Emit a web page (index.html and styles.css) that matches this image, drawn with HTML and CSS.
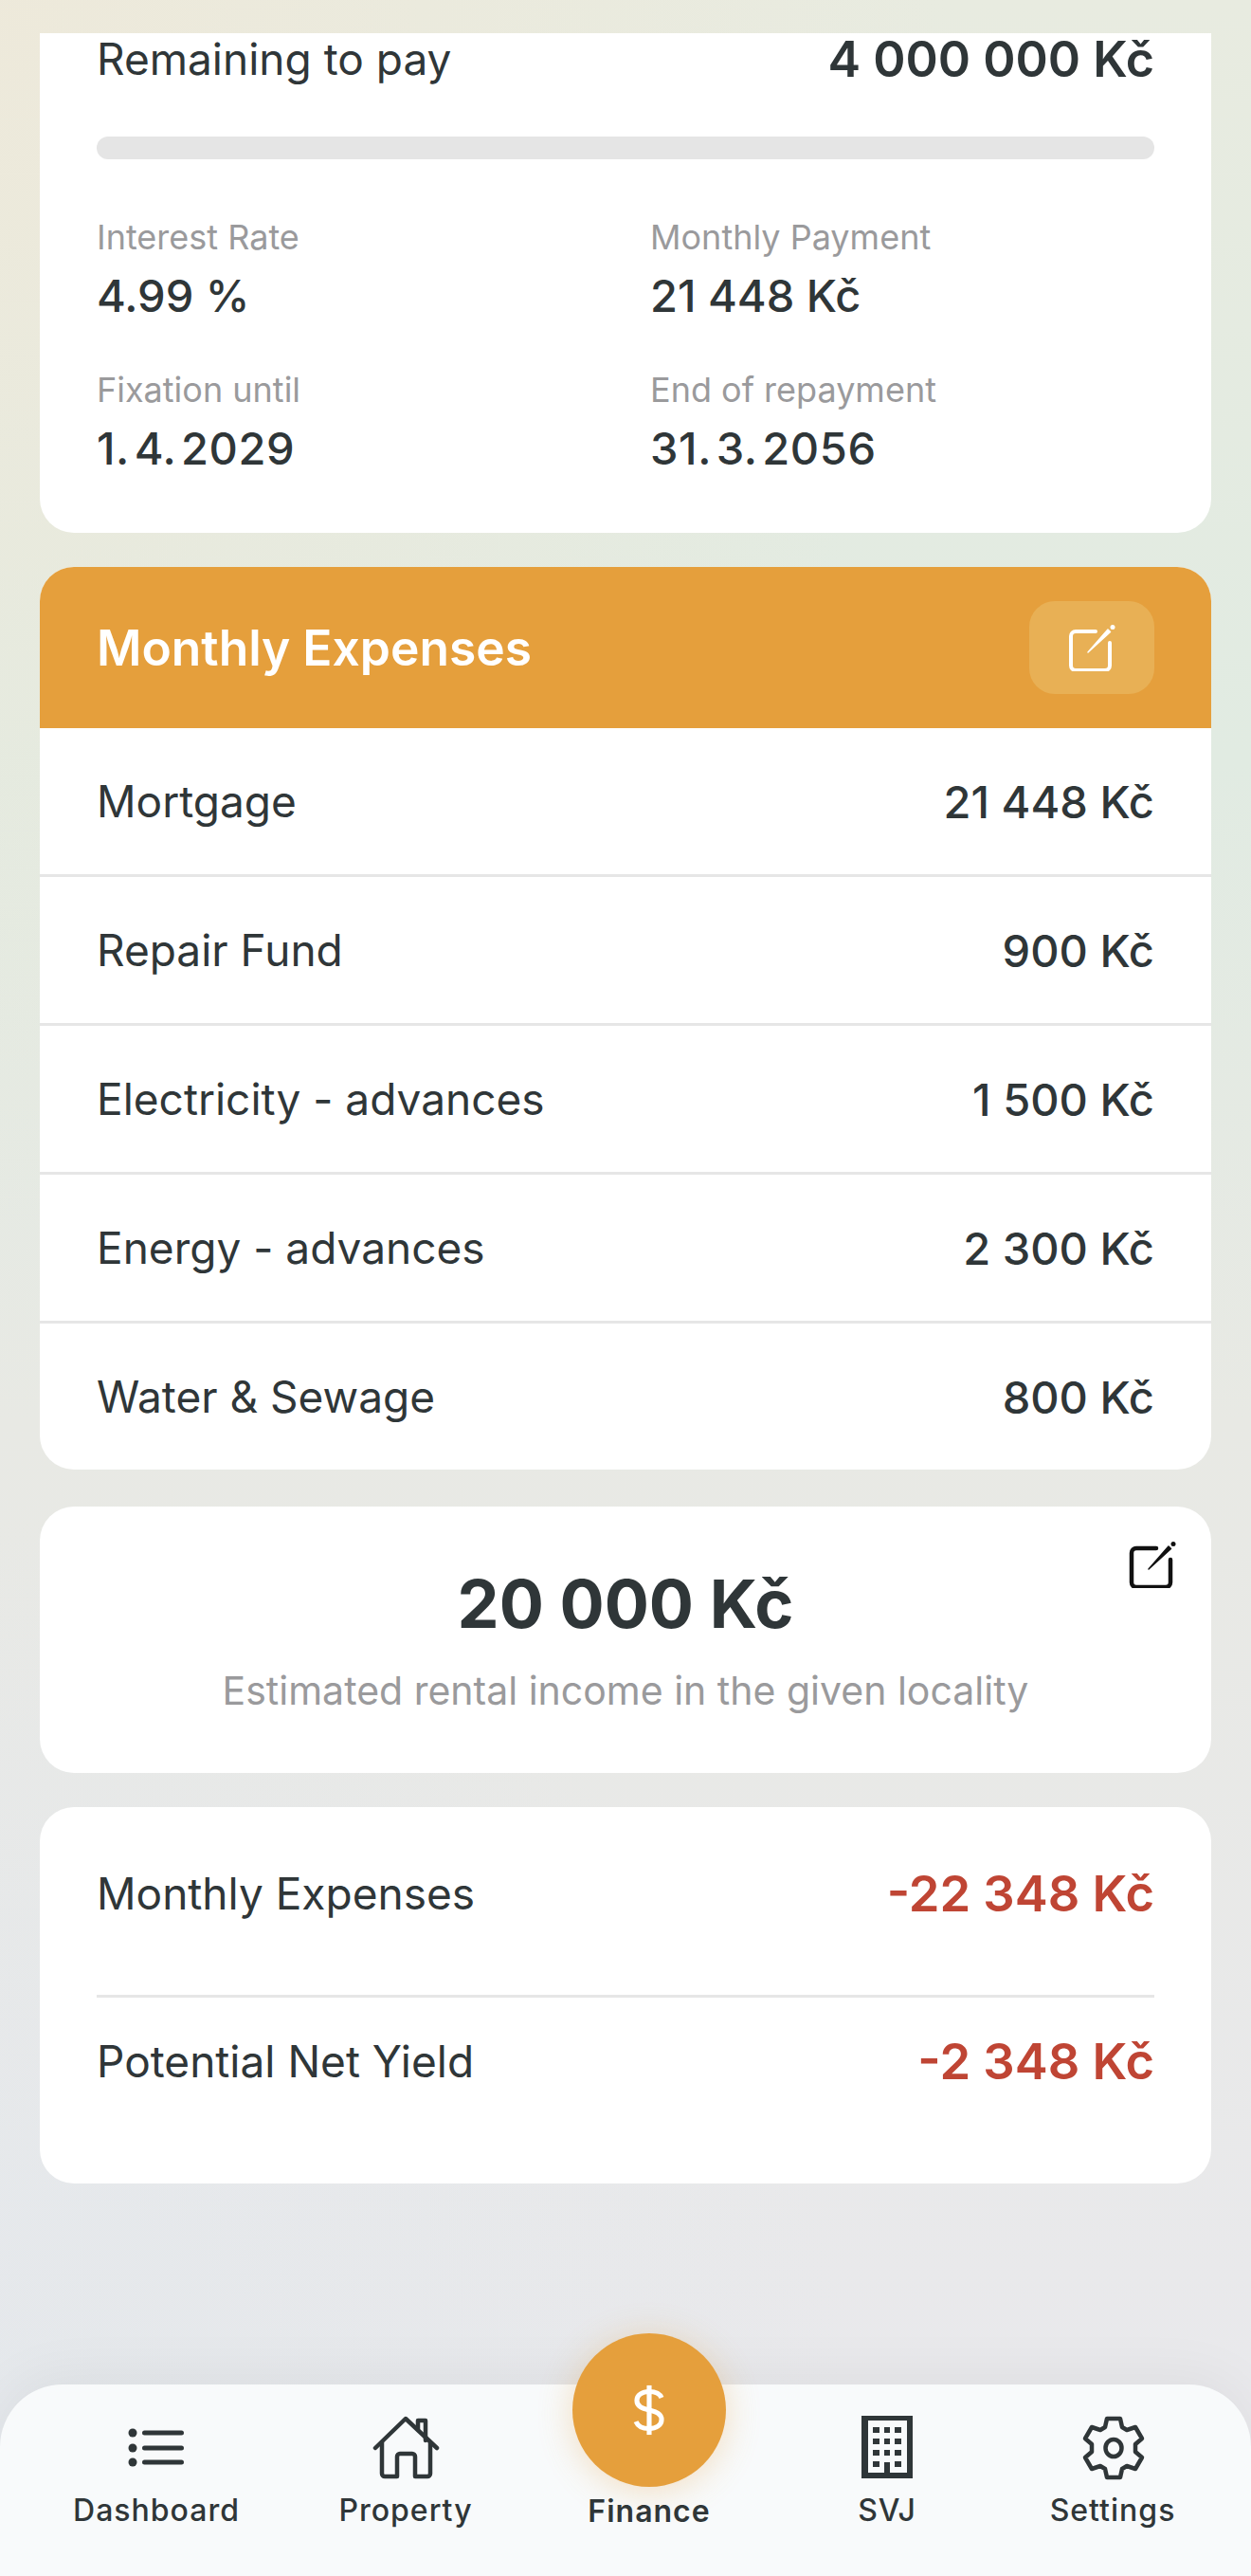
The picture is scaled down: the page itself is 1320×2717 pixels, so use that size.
FILE: index.html
```html
<!DOCTYPE html>
<html lang="en">
<head>
  <meta charset="UTF-8">
  <meta name="viewport" content="width=device-width, initial-scale=1.0">
  <title>Finance</title>
  <link rel="stylesheet" href="styles.css">
</head>
<body>
  <div class="screen">
    <main class="content">
      <section class="card mortgage">
        <div class="remaining">
          <span class="remaining-label">Remaining to pay</span>
          <span class="remaining-value">4&nbsp;000&nbsp;000&nbsp;Kč</span>
        </div>
        <div class="progress"></div>
        <div class="facts">
          <div class="fact"><div class="fact-label">Interest Rate</div><div class="fact-value">4.99 %</div></div>
          <div class="fact"><div class="fact-label">Monthly Payment</div><div class="fact-value">21&nbsp;448&nbsp;Kč</div></div>
          <div class="fact"><div class="fact-label">Fixation until</div><div class="fact-value fact-date">1.&#8202;4.&#8202;2029</div></div>
          <div class="fact"><div class="fact-label">End of repayment</div><div class="fact-value fact-date">31.&#8202;3.&#8202;2056</div></div>
        </div>
      </section>

      <section class="card expenses">
        <header class="expenses-head">
          <h2>Monthly Expenses</h2>
          <button type="button" class="head-edit">
            <svg class="edit-icon" viewBox="0 0 50 50"><path d="M29 8H8a5 5 0 0 0-5 5v31a5 5 0 0 0 5 5h31a5 5 0 0 0 5-5V20" fill="none" stroke="currentColor" stroke-width="4" stroke-linecap="round"/><path d="M21 30 42 6l2.500 2.500z" fill="currentColor" stroke="currentColor" stroke-width="1.500" stroke-linejoin="round"/><circle cx="47" cy="3.500" r="2.500" fill="currentColor"/></svg>
          </button>
        </header>
        <div class="expense-row"><span>Mortgage</span><span class="expense-value">21&nbsp;448&nbsp;Kč</span></div>
        <div class="expense-row"><span>Repair Fund</span><span class="expense-value">900&nbsp;Kč</span></div>
        <div class="expense-row"><span>Electricity - advances</span><span class="expense-value">1&nbsp;500&nbsp;Kč</span></div>
        <div class="expense-row"><span>Energy - advances</span><span class="expense-value">2&nbsp;300&nbsp;Kč</span></div>
        <div class="expense-row"><span>Water &amp; Sewage</span><span class="expense-value">800&nbsp;Kč</span></div>
      </section>

      <section class="card rental">
        <button type="button" class="rental-edit">
          <svg class="edit-icon" viewBox="0 0 50 50"><path d="M29 8H8a5 5 0 0 0-5 5v31a5 5 0 0 0 5 5h31a5 5 0 0 0 5-5V20" fill="none" stroke="currentColor" stroke-width="4.500" stroke-linecap="round"/><path d="M21 30 42 6l2.500 2.500z" fill="currentColor" stroke="currentColor" stroke-width="1.500" stroke-linejoin="round"/><circle cx="47" cy="3.500" r="2.500" fill="currentColor"/></svg>
        </button>
        <div class="rental-amount">20&nbsp;000&nbsp;Kč</div>
        <div class="rental-note">Estimated rental income in the given locality</div>
      </section>

      <section class="card summary">
        <div class="summary-row"><span>Monthly Expenses</span><span class="negative">-22&nbsp;348&nbsp;Kč</span></div>
        <div class="summary-row"><span>Potential Net Yield</span><span class="negative">-2&nbsp;348&nbsp;Kč</span></div>
      </section>
    </main>

    <nav class="tabbar">
      <a class="tab">
        <svg class="tab-icon" width="76" height="68" viewBox="0 0 76 68"><g fill="#2f3638"><circle cx="13" cy="18" r="4.500"/><circle cx="13" cy="34" r="4.500"/><circle cx="13" cy="49" r="4.500"/></g><path d="M25.500 18h39M25.500 34h39M25.500 49h39" stroke="#2f3638" stroke-width="5" stroke-linecap="round"/></svg>
        <span>Dashboard</span>
      </a>
      <a class="tab">
        <svg class="tab-icon" width="76" height="68" viewBox="0 0 76 68" fill="none" stroke="#2f3638" stroke-width="4.500" stroke-linecap="round" stroke-linejoin="round"><path d="M6 34 38 3l33 31"/><path d="M13 28v33a3 3 0 0 0 3 3h13V43a3 3 0 0 1 3-3h13a3 3 0 0 1 3 3v21h13a3 3 0 0 0 3-3V28"/><path d="M51 14V5h8v21"/></svg>
        <span>Property</span>
      </a>
      <a class="tab tab-active">
        <span class="fab">
          <svg width="34" height="54" viewBox="0 0 36 58" fill="none" stroke="#fff" stroke-width="5.500"><path d="M18 1v56"/><path d="M32 15c-2-5-7-7-14-7C10 8 4 12 4 18c0 7 6 9 14 11s14 4 14 11c0 6-6 10-14 10-8 0-13-3-15-8"/></svg>
        </span>
        <span>Finance</span>
      </a>
      <a class="tab">
        <svg class="tab-icon" width="76" height="68" viewBox="0 0 76 68"><path fill="#2f3638" fill-rule="evenodd" d="M11 0h54v66H11zM18 5v55h17V49h6v11h18V5zM23 12h7v6h-7zM35 12h6v6h-6zM46 12h7v6h-7zM23 24h7v6h-7zM35 24h6v6h-6zM46 24h7v6h-7zM23 36h7v6h-7zM35 36h6v6h-6zM46 36h7v6h-7zM23 48h7v6h-7zM46 48h7v6h-7z"/></svg>
        <span>SVJ</span>
      </a>
      <a class="tab">
        <svg class="tab-icon" width="76" height="68" viewBox="0 0 76 68" fill="none" stroke="#2f3638" stroke-width="4.500" stroke-linejoin="round"><path d="M32 3h14l2 9 5 3 9-3 7 12-7 6v8l7 6-7 12-9-3-5 3-2 9H32l-2-9-5-3-9 3-7-12 7-6v-8l-7-6 7-12 9 3 5-3z"/><ellipse cx="39" cy="34" rx="8.500" ry="9"/></svg>
        <span>Settings</span>
      </a>
    </nav>
  </div>
</body>
</html>
```

FILE: styles.css
```css
* { box-sizing: border-box; }
html, body { margin: 0; padding: 0; }
body { font-family: Inter, "Liberation Sans", sans-serif; color: #2f3638; }

.screen {
  width: 1320px;
  height: 2717px;
  overflow: hidden;
  display: flex;
  flex-direction: column;
  background:
    radial-gradient(1000px 1300px at 0 0, rgba(238,233,218,0.9), rgba(238,233,218,0)),
    radial-gradient(900px 1000px at 0 2600px, rgba(227,232,236,0.7), rgba(227,232,236,0)),
    linear-gradient(180deg, #e8ebe0 0, #e1ebe2 800px, #e8e9e4 1500px, #e9e9ec 2520px);
}

.content { padding: 35px 42px 0; display: flex; flex-direction: column; gap: 36px; }
.card { background: #fff; border-radius: 36px; }

.mortgage { height: 527px; padding: 0 60px; border-radius: 0 0 36px 36px; }
.remaining { display: flex; justify-content: space-between; align-items: center; height: 60px; margin-top: -3px; font-size: 46px; }
.remaining-value { font-size: 52px; font-weight: 600; }
.progress { height: 24px; margin-top: 52px; background: #e5e5e5; border-radius: 12px; }
.facts { display: grid; grid-template-columns: 1fr 1fr; column-gap: 52px; row-gap: 46px; margin-top: 60px; }
.fact-label { font-size: 36px; line-height: 44px; color: #9a9a9c; }
.fact-value { font-size: 47px; line-height: 62px; font-weight: 500; margin-top: 9px; }
.fact-date { letter-spacing: 0.6px; }

.expenses { overflow: hidden; }
.expenses-head { height: 170px; background: #e59f3c; color: #fff; display: flex; align-items: center; justify-content: space-between; padding: 0 60px; }
.expenses-head h2 { margin: 0; font-size: 51.500px; font-weight: 600; }
.head-edit { width: 132px; height: 98px; border: none; border-radius: 27px; background: #e8b055; color: #fff; padding: 0; display: flex; align-items: center; justify-content: center; }
.edit-icon { width: 50px; height: 50px; display: block; }
.expense-row { height: 157px; display: flex; align-items: center; justify-content: space-between; padding: 0 60px; font-size: 46px; border-bottom: 3px solid #e6e6e6; }
.expense-row:last-child { border-bottom: none; height: 154px; }
.expense-value { font-size: 47px; font-weight: 500; }

.rental { position: relative; height: 281px; margin-top: 3px; padding-top: 60px; text-align: center; }
.rental-edit { position: absolute; top: 36px; right: 37px; border: none; background: none; padding: 0; color: #111; }
.rental-amount { font-size: 70px; line-height: 86px; font-weight: 700; }
.rental-note { font-size: 41px; line-height: 52px; color: #9a9a9c; margin-top: 22px; }

.summary { height: 397px; padding: 61px 60px 0; }
.summary-row { display: flex; justify-content: space-between; align-items: center; height: 60px; font-size: 46px; box-sizing: content-box; padding-bottom: 77px; border-bottom: 3px solid #e6e6e6; }
.summary-row + .summary-row { padding: 37px 0 0; border-bottom: none; }
.negative { color: #bf4534; font-size: 52.500px; font-weight: 600; }

.tabbar {
  margin-top: auto;
  height: 202px;
  background: #f8fafb;
  border-radius: 66px 66px 0 0;
  box-shadow: 0 -8px 60px rgba(0,0,0,0.05);
  display: grid;
  grid-template-columns: 330px 196px 318px 184px 292px;
}
.tab { display: flex; flex-direction: column; align-items: center; font-size: 32px; line-height: 40px; font-weight: 500; letter-spacing: 1px; padding-top: 33px; }
.tab-icon { display: block; margin-bottom: 12px; }
.tab-active { font-weight: 600; padding-top: 0; }
.fab { width: 162px; height: 162px; margin: -54px 0 6px; border-radius: 50%; background: #e59f3c; display: flex; align-items: center; justify-content: center; box-shadow: 0 4px 36px rgba(229,159,60,0.3); }
.fab svg { display: block; }
```
